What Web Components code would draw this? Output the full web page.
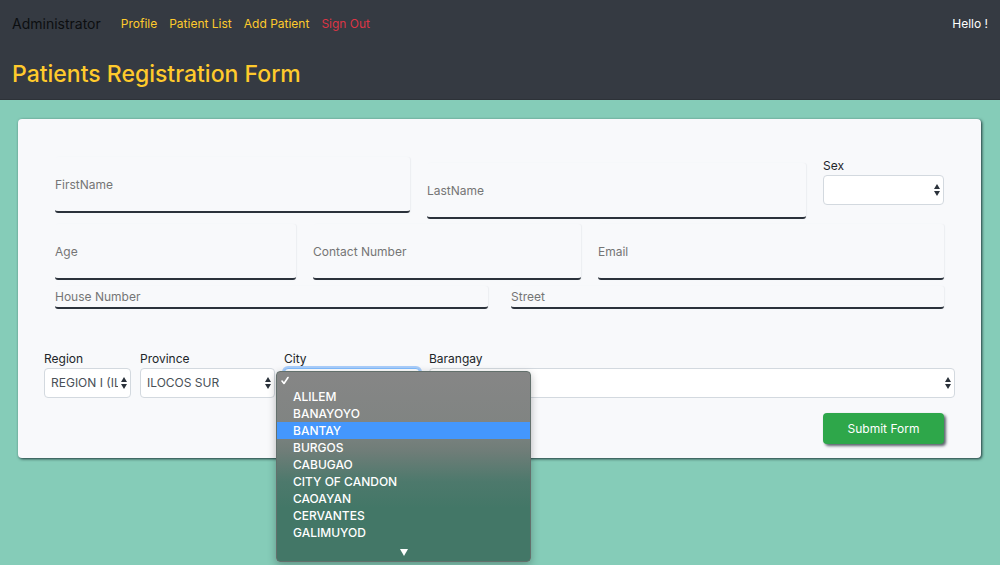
<!DOCTYPE html>
<html lang="en">
<head>
<meta charset="utf-8">
<title>Patients Registration Form</title>
<meta name="viewport" content="width=device-width, initial-scale=1">
<style>
  html { background: #85ccb8; }
  body { margin: 0; min-height: 100vh; font: 400 12px/18px Inter, "Liberation Sans", sans-serif; color: #212529; }
</style>
</head>
<body>
<registration-page></registration-page>

<script>
const define = (name, html, setup) => {
  const template = document.createElement('template');
  template.innerHTML = html;
  customElements.define(name, class extends HTMLElement {
    connectedCallback() {
      if (this.shadowRoot) return;
      this.attachShadow({ mode: 'open' }).append(template.content.cloneNode(true));
      if (setup) setup(this, this.shadowRoot);
    }
  });
};

/* Navigation link, tone="danger" for the sign-out action */
define('nav-link', `
  <style>
    :host { display: block; }
    a { color: #ffca2c; text-decoration: none; }
    :host([tone="danger"]) a { color: #dc3545; }
  </style>
  <a href="#"><slot></slot></a>
`);

define('site-header', `
  <style>
    :host { display: block; background: #353a42; border-bottom: 1px solid #2d3238; padding: 12px 12px 10px; }
    nav { display: flex; align-items: center; gap: 12px; line-height: 24px; }
    .brand { color: #0c0e10; font-size: 14px; margin-right: 8px; text-decoration: none; }
    .greeting { margin-left: auto; color: #fff; }
    h1 { margin: 23px 0 0; font-size: 23px; line-height: 30px; font-weight: 500; color: #ffca2c; }
  </style>
  <nav>
    <a class="brand" href="#">Administrator</a>
    <nav-link>Profile</nav-link>
    <nav-link>Patient List</nav-link>
    <nav-link>Add Patient</nav-link>
    <nav-link tone="danger">Sign Out</nav-link>
    <span class="greeting">Hello !</span>
  </nav>
  <h1><slot></slot></h1>
`);

/* Underlined text box */
define('text-field', `
  <style>
    :host { display: block; min-width: 0; }
    input {
      display: block; box-sizing: border-box; width: 100%; height: 56px; padding: 0;
      border: 0; border-bottom: 2px solid #2b323b; border-radius: 3px; outline: 0;
      background: transparent; box-shadow: 1px 0 1px #eceef1; font: inherit; color: #343a40;
    }
    :host([compact]) input { height: 23px; }
    input::placeholder { color: #757575; opacity: 1; }
  </style>
  <input>
`, (host, root) => {
  const input = root.querySelector('input');
  input.type = host.getAttribute('type') || 'text';
  input.placeholder = host.getAttribute('label');
  input.setAttribute('aria-label', host.getAttribute('label'));
});

/* Labelled drop-down with a double-arrow indicator */
define('select-field', `
  <style>
    :host { display: block; position: relative; min-width: 0; }
    label { display: block; line-height: 18px; }
    .box { display: grid; grid-template-columns: 1fr; align-items: center; }
    .box > * { grid-area: 1 / 1; }
    select {
      appearance: none; box-sizing: border-box; width: 100%; min-width: 0; height: 30px; margin: 0;
      padding: 0 12px 0 6px; border: 1px solid #d3d9df; border-radius: 4px; outline: 0;
      background: #fff; font: inherit; color: #495057;
    }
    :host([active]) select { border-color: #80bdff; box-shadow: 0 0 0 2px #a9cdfa; }
    svg { justify-self: end; margin-right: 4px; width: 6px; height: 12px; fill: #2b323b; pointer-events: none; }
  </style>
  <label for="choice"></label>
  <div class="box">
    <select id="choice"></select>
    <svg viewBox="0 0 6 12" aria-hidden="true"><path d="M3 0 6 5H0zM3 12 0 7h6z"/></svg>
  </div>
  <slot></slot>
`, (host, root) => {
  root.querySelector('label').textContent = host.getAttribute('label');
  const option = document.createElement('option');
  option.textContent = host.getAttribute('value') || '';
  root.querySelector('select').append(option);
});

/* Floating list of options, opened over the City drop-down */
define('option-menu', `
  <style>
    :host {
      display: block; position: absolute; z-index: 2; top: 21px; left: -8px;
      box-sizing: border-box; width: 255px; border: 1px solid #63706c; border-radius: 4px; overflow: hidden;
      background: linear-gradient(#868686 0, #808482 28%, #6f7d78 42%, #4d796c 58%, #437767 72%, #437767 100%);
      box-shadow: 0 3px 8px rgba(0, 0, 0, .28);
      color: #fff; font-weight: 500;
    }
    .check, .more { display: block; fill: none; }
    .check { margin: 4px 0 3px 4px; }
    .more { margin: 8px auto 5px; fill: #fff; }
    ul { list-style: none; margin: 0; padding: 0; }
  </style>
  <svg class="check" width="8" height="9" viewBox="0 0 8 9" aria-hidden="true"><path d="M1 5 3 7.500 7 1.500" stroke="#fff" stroke-width="1.600" stroke-linecap="round" stroke-linejoin="round"/></svg>
  <ul role="listbox" aria-label="City"><slot></slot></ul>
  <svg class="more" width="8" height="7" viewBox="0 0 8 7" aria-hidden="true"><path d="M0 0h8L4 7z"/></svg>
`);

define('menu-option', `
  <style>
    :host { display: block; }
    li { list-style: none; padding-left: 16px; line-height: 17px; }
    :host([current]) li { background: #4497fd; }
  </style>
  <li role="option"><slot></slot></li>
`);

define('submit-button', `
  <style>
    :host { display: flex; }
    button {
      flex: 1; height: 31px; padding: 0; border: 0; border-radius: 4px; background: #2ea74a; color: #fff;
      font: inherit; box-shadow: 2px 2px 3px #59606a; cursor: pointer;
    }
  </style>
  <button type="submit"><slot></slot></button>
`);

define('form-card', `
  <style>
    :host {
      display: block; margin: 19px 19px 19px 18px; padding: 38px 26px 14px; background: #f8f9fb;
      border-radius: 4px; box-shadow: 1px 1px 3px #1d3437;
    }
  </style>
  <slot></slot>
`);

define('registration-page', `
  <style>
    :host { display: block; }
    .row { display: grid; gap: 17px; align-items: start; padding: 0 11px; }
    .name { grid-template-columns: 355fr 379fr 121fr; }
    .name text-field + text-field { margin-top: 6px; }
    .contact { grid-template-columns: 241fr 268fr 346fr; margin-top: 5px; }
    .street { grid-template-columns: 1fr 1fr; gap: 23px; margin-top: 6px; }
    .place { grid-template-columns: 87fr 135fr 136fr 526fr; gap: 9px; padding: 0; margin-top: 41px; }
    .actions { grid-template-columns: 751fr 121fr; margin-top: 15px; }
    submit-button { grid-column: 2; }
  </style>
  <site-header>Patients Registration Form</site-header>
  <main>
    <form-card>
      <form>
        <div class="row name">
          <text-field label="FirstName"></text-field>
          <text-field label="LastName"></text-field>
          <select-field label="Sex"></select-field>
        </div>
        <div class="row contact">
          <text-field label="Age"></text-field>
          <text-field label="Contact Number" type="tel"></text-field>
          <text-field label="Email" type="email"></text-field>
        </div>
        <div class="row street">
          <text-field compact label="House Number"></text-field>
          <text-field compact label="Street"></text-field>
        </div>
        <div class="row place">
          <select-field label="Region" value="REGION I (ILOCOS REGION)"></select-field>
          <select-field label="Province" value="ILOCOS SUR"></select-field>
          <select-field label="City" active>
            <option-menu>
              <menu-option>ALILEM</menu-option>
              <menu-option>BANAYOYO</menu-option>
              <menu-option current>BANTAY</menu-option>
              <menu-option>BURGOS</menu-option>
              <menu-option>CABUGAO</menu-option>
              <menu-option>CITY OF CANDON</menu-option>
              <menu-option>CAOAYAN</menu-option>
              <menu-option>CERVANTES</menu-option>
              <menu-option>GALIMUYOD</menu-option>
            </option-menu>
          </select-field>
          <select-field label="Barangay"></select-field>
        </div>
        <div class="row actions">
          <submit-button>Submit Form</submit-button>
        </div>
      </form>
    </form-card>
  </main>
`);
</script>
</body>
</html>
